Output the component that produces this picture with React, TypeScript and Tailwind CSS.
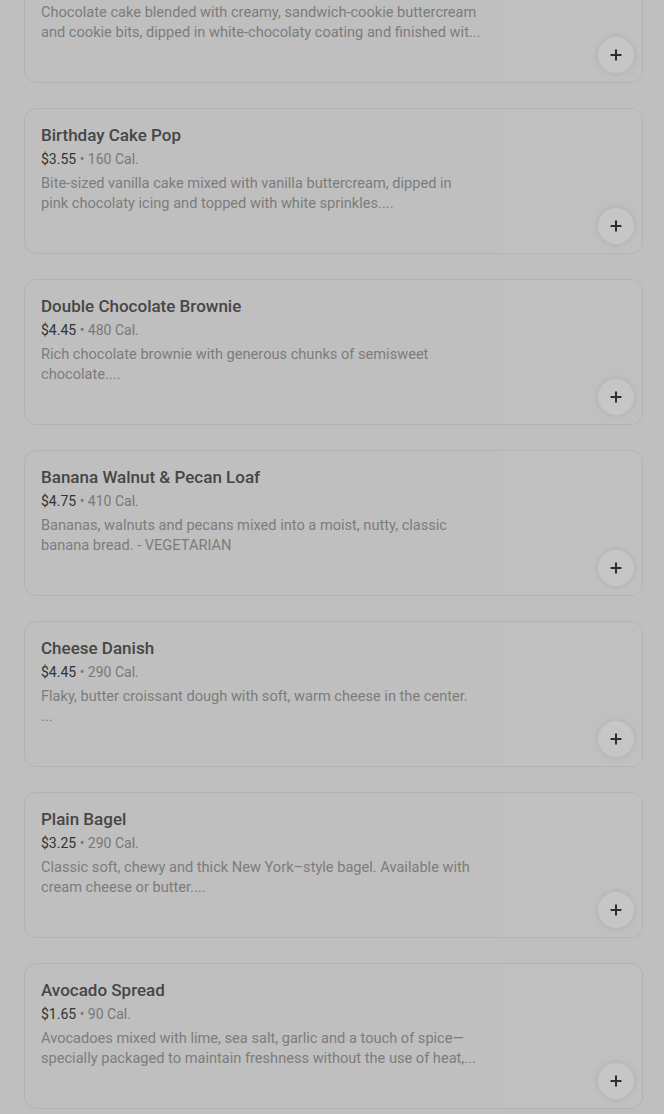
import { Plus } from "lucide-react";

type Item = {
  name: string;
  price: string;
  cal: string;
  desc: string[];
};

// description lines are kept as the menu shows them, already cut
const items: Item[] = [
  {
    name: "Cookies & Cream Cake Pop",
    price: "$3.55",
    cal: "170 Cal.",
    desc: [
      "Chocolate cake blended with creamy, sandwich-cookie buttercream",
      "and cookie bits, dipped in white-chocolaty coating and finished wit...",
    ],
  },
  {
    name: "Birthday Cake Pop",
    price: "$3.55",
    cal: "160 Cal.",
    desc: [
      "Bite-sized vanilla cake mixed with vanilla buttercream, dipped in",
      "pink chocolaty icing and topped with white sprinkles....",
    ],
  },
  {
    name: "Double Chocolate Brownie",
    price: "$4.45",
    cal: "480 Cal.",
    desc: ["Rich chocolate brownie with generous chunks of semisweet", "chocolate...."],
  },
  {
    name: "Banana Walnut & Pecan Loaf",
    price: "$4.75",
    cal: "410 Cal.",
    desc: [
      "Bananas, walnuts and pecans mixed into a moist, nutty, classic",
      "banana bread. - VEGETARIAN",
    ],
  },
  {
    name: "Cheese Danish",
    price: "$4.45",
    cal: "290 Cal.",
    desc: ["Flaky, butter croissant dough with soft, warm cheese in the center.", "..."],
  },
  {
    name: "Plain Bagel",
    price: "$3.25",
    cal: "290 Cal.",
    desc: [
      "Classic soft, chewy and thick New York–style bagel. Available with",
      "cream cheese or butter....",
    ],
  },
  {
    name: "Avocado Spread",
    price: "$1.65",
    cal: "90 Cal.",
    desc: [
      "Avocadoes mixed with lime, sea salt, garlic and a touch of spice—",
      "specially packaged to maintain freshness without the use of heat,...",
    ],
  },
];

function MenuCard({ item }: { item: Item }) {
  return (
    <div className="flex h-[146px] shrink-0 overflow-hidden rounded-xl border border-[#b3b3b3] bg-[#bfbfbf]">
      <div className="flex-1 px-4 pt-4">
        <div className="text-[17px] leading-5 font-medium text-[#464646]">
          {item.name}
        </div>
        <div className="mt-1 text-[14px] leading-5 text-[#333]">
          {item.price}
          <span className="text-[#787878]"> • {item.cal}</span>
        </div>
        <div className="mt-1 text-[14.6px] leading-5 text-[#7c7c7c]">
          {item.desc.map((line, i) => (
            <div key={i} className="whitespace-nowrap">
              {line}
            </div>
          ))}
        </div>
      </div>
      <div className="relative w-[142px] bg-[#c0c0c0]">
        <button className="absolute right-2 bottom-[9px] flex h-9 w-9 items-center justify-center rounded-full bg-[#c6c6c6] shadow-[0_0_6px_rgba(0,0,0,0.1)]">
          <Plus size={16} strokeWidth={3} color="#2e2e2e" />
        </button>
      </div>
    </div>
  );
}

export default function App() {
  return (
    <div
      className="h-[1114px] w-[664px] overflow-hidden bg-[#bfbfbf]"
      style={{ fontFamily: "Roboto, 'Liberation Sans', sans-serif" }}
    >
      <div className="-mt-[63px] flex flex-col gap-[25px] pr-[21px] pl-6">
        {items.map((item) => (
          <MenuCard key={item.name} item={item} />
        ))}
      </div>
    </div>
  );
}
